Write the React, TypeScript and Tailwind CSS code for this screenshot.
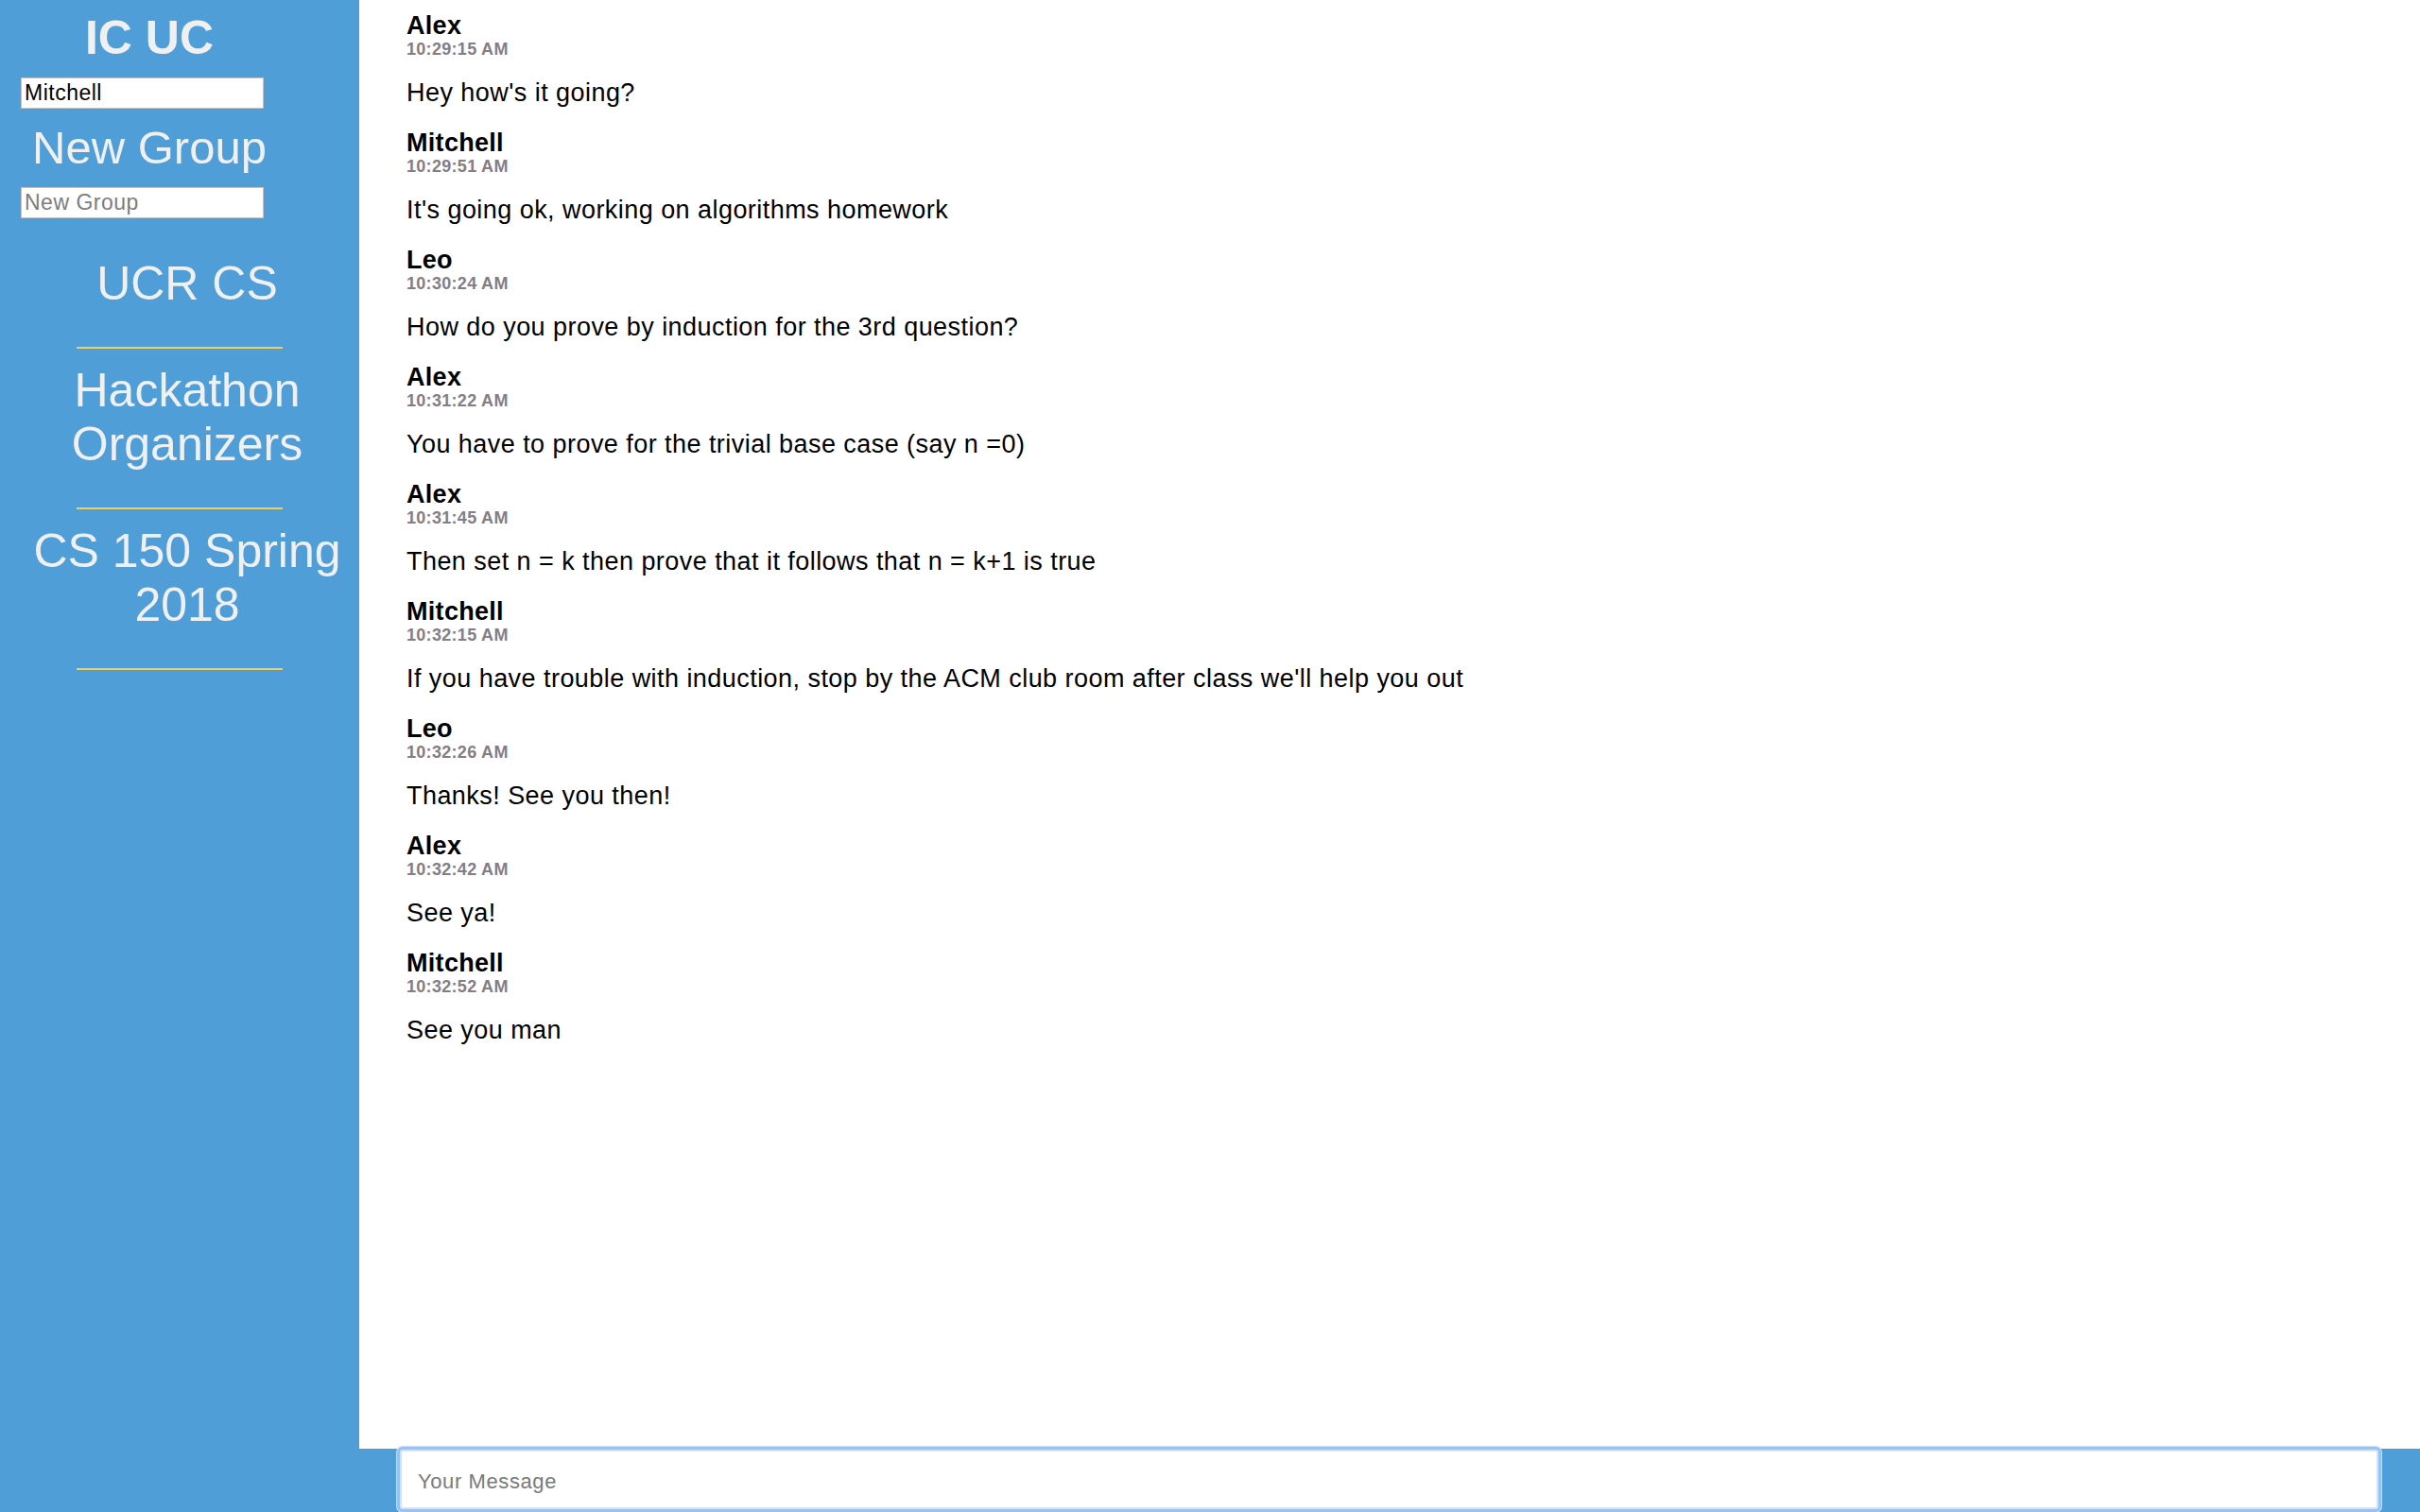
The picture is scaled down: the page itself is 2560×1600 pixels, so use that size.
import { useState } from "react";

type Message = {
  author: string;
  time: string;
  text: string;
};

const messages: Message[] = [
  { author: "Alex", time: "10:29:15 AM", text: "Hey how's it going?" },
  { author: "Mitchell", time: "10:29:51 AM", text: "It's going ok, working on algorithms homework" },
  { author: "Leo", time: "10:30:24 AM", text: "How do you prove by induction for the 3rd question?" },
  { author: "Alex", time: "10:31:22 AM", text: "You have to prove for the trivial base case (say n =0)" },
  { author: "Alex", time: "10:31:45 AM", text: "Then set n = k then prove that it follows that n = k+1 is true" },
  { author: "Mitchell", time: "10:32:15 AM", text: "If you have trouble with induction, stop by the ACM club room after class we'll help you out" },
  { author: "Leo", time: "10:32:26 AM", text: "Thanks! See you then!" },
  { author: "Alex", time: "10:32:42 AM", text: "See ya!" },
  { author: "Mitchell", time: "10:32:52 AM", text: "See you man" },
];

const groups = ["UCR CS", "Hackathon Organizers", "CS 150 Spring 2018"];

export default function App() {
  const [username, setUsername] = useState("Mitchell");
  const [newGroup, setNewGroup] = useState("");
  const [draft, setDraft] = useState("");

  return (
    <div className="h-screen w-full flex flex-col bg-white font-['Liberation_Sans',Arial,sans-serif] overflow-hidden">
      <div className="flex flex-1 min-h-0">
        {/* Sidebar */}
        <aside className="w-[380px] shrink-0 bg-[#4f9ed7] text-[#f0f0f0]">
          <div className="w-[316px] pt-[12px] text-center">
            <h1 className="text-[50px] leading-[57px] font-bold">IC UC</h1>
          </div>
          <input
            value={username}
            onChange={(e) => setUsername(e.target.value)}
            className="block ml-[22px] mt-[13px] w-[257px] h-[33px] bg-white border border-[#c3c3c3] px-[3px] text-[23px] tracking-[0.5px] text-black outline-none"
          />
          <div className="w-[316px] mt-[13px] text-center">
            <h2 className="text-[49px] leading-[57px]">New Group</h2>
          </div>
          <input
            value={newGroup}
            onChange={(e) => setNewGroup(e.target.value)}
            placeholder="New Group"
            className="block ml-[22px] mt-[13px] w-[257px] h-[33px] bg-white border border-[#c3c3c3] px-[3px] text-[23px] tracking-[0.5px] text-black placeholder:text-[#7d7d7d] outline-none"
          />

          {/* Group list */}
          <div className="mt-[25px]">
            {groups.map((g) => (
              <div key={g}>
                <div className="pl-[16px] pt-[16px] pb-[38px] text-center text-[50px] leading-[57px] cursor-pointer">
                  {g}
                </div>
                <div className="w-[218px] h-[2px] mx-auto bg-[#f2cf5a]" />
              </div>
            ))}
          </div>
        </aside>

        {/* Messages */}
        <main className="flex-1 pl-[50px] text-black">
          {messages.map((m, i) => (
            <div key={i} className="pt-[12px] pb-[11px]">
              <div className="text-[27px] leading-[30px] font-bold tracking-[0.3px]">{m.author}</div>
              <div className="text-[18px] leading-[20px] font-bold tracking-[0.3px] text-[#857d85]">{m.time}</div>
              <p className="mt-[21px] text-[27px] leading-[30px] tracking-[0.45px]">{m.text}</p>
            </div>
          ))}
        </main>
      </div>

      {/* Message bar */}
      <div className="h-[67px] shrink-0 bg-[#4f9ed7] flex items-start pl-[423px] pr-[44px] pt-[1px]">
        <input
          value={draft}
          onChange={(e) => setDraft(e.target.value)}
          placeholder="Your Message"
          className="w-full h-[63px] bg-white rounded-[3px] border-2 border-[#cfe3fb] shadow-[0_0_0_3px_#97c2f6,0_0_0_4px_#c9defa] pl-[17px] pt-[5px] text-[22px] tracking-[0.6px] text-black placeholder:text-[#7a7a7a] outline-none"
        />
      </div>
    </div>
  );
}
